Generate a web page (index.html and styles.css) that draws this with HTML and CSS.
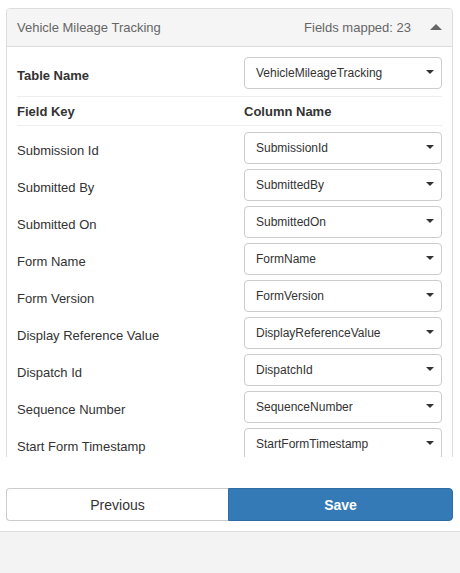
FILE: index.html
```html
<!DOCTYPE html>
<html>
<head>
<meta charset="utf-8">
<link rel="stylesheet" href="styles.css">
</head>
<body>
<div class="scroll">
  <div class="panel">
    <div class="panel-heading">
      <span class="title">Vehicle Mileage Tracking</span>
      <span class="count">Fields mapped: 23</span>
      <span class="caret-up"></span>
    </div>
    <div class="panel-body">
      <div class="row table-row">
        <span class="label bold">Table Name</span>
        <div class="select">VehicleMileageTracking<span class="caret"></span></div>
      </div>
      <div class="row head-row">
        <span class="bold">Field Key</span>
        <span class="bold">Column Name</span>
      </div>
      <div class="fields">
        <div class="row"><span class="label">Submission Id</span><div class="select">SubmissionId<span class="caret"></span></div></div>
        <div class="row"><span class="label">Submitted By</span><div class="select">SubmittedBy<span class="caret"></span></div></div>
        <div class="row"><span class="label">Submitted On</span><div class="select">SubmittedOn<span class="caret"></span></div></div>
        <div class="row"><span class="label">Form Name</span><div class="select">FormName<span class="caret"></span></div></div>
        <div class="row"><span class="label">Form Version</span><div class="select">FormVersion<span class="caret"></span></div></div>
        <div class="row"><span class="label">Display Reference Value</span><div class="select">DisplayReferenceValue<span class="caret"></span></div></div>
        <div class="row"><span class="label">Dispatch Id</span><div class="select">DispatchId<span class="caret"></span></div></div>
        <div class="row"><span class="label">Sequence Number</span><div class="select">SequenceNumber<span class="caret"></span></div></div>
        <div class="row"><span class="label">Start Form Timestamp</span><div class="select">StartFormTimestamp<span class="caret"></span></div></div>
      </div>
    </div>
  </div>
</div>
<div class="actions">
  <button class="btn btn-prev">Previous</button>
  <button class="btn btn-save">Save</button>
</div>
<div class="bottom"></div>
</body>
</html>
```

FILE: styles.css
```css
html, body {
  margin: 0;
  padding: 0;
  background: #fff;
  font-family: "Liberation Sans", Arial, Helvetica, sans-serif;
  color: #333;
}

.scroll {
  height: 457px;
  overflow: hidden;
  padding: 8px 7px 0 6px;
  box-sizing: border-box;
}

.panel {
  border: 1px solid #ddd;
  border-radius: 4px;
  background: #fff;
}

.panel-heading {
  height: 38px;
  box-sizing: border-box;
  background: #f5f5f5;
  border-bottom: 1px solid #ddd;
  border-radius: 4px 4px 0 0;
  display: flex;
  align-items: center;
  padding: 0 10px;
  font-size: 13px;
  color: #666;
}

.panel-heading .title {
  flex: 1;
}

.panel-heading .count {
  color: #666;
  margin-right: 19px;
}

.caret-up {
  width: 0;
  height: 0;
  margin-top: -1px;
  border-left: 6px solid transparent;
  border-right: 6px solid transparent;
  border-bottom: 6px solid #666;
}

.panel-body {
  padding: 10px 10px 0 10px;
}

.row {
  display: grid;
  grid-template-columns: 227px 198px;
  align-items: center;
  font-size: 13px;
}

.bold {
  font-weight: bold;
}

.label {
  padding-top: 5px;
}

.table-row {
  padding-bottom: 7px;
  border-bottom: 1px solid #eee;
}

.head-row {
  height: 29px;
  box-sizing: border-box;
  border-bottom: 1px solid #eee;
}

.fields {
  padding-top: 6px;
}

.fields .row {
  margin-bottom: 5px;
}

.select {
  position: relative;
  height: 32px;
  box-sizing: border-box;
  border: 1px solid #ccc;
  border-radius: 4px;
  padding: 0 12px 0 11px;
  display: flex;
  align-items: center;
  font-size: 12px;
  color: #333;
  background: #fff;
}

.caret {
  position: absolute;
  right: 7px;
  top: 12px;
  width: 0;
  height: 0;
  border-left: 4px solid transparent;
  border-right: 4px solid transparent;
  border-top: 4px solid #333;
}

.actions {
  display: flex;
  margin: 31px 7px 0 6px;
  height: 33px;
}

.btn {
  flex: 1;
  height: 33px;
  margin: 0;
  font-family: "Liberation Sans", Arial, Helvetica, sans-serif;
  font-size: 14px;
  cursor: pointer;
}

.btn-prev {
  background: #fff;
  color: #333;
  border: 1px solid #ccc;
  border-right: none;
  border-radius: 4px 0 0 4px;
  flex: 0 0 222px;
}

.btn-save {
  background: #337ab7;
  color: #fff;
  font-weight: bold;
  border: 1px solid #2e6da4;
  border-radius: 0 4px 4px 0;
}

.bottom {
  margin-top: 10px;
  height: 41px;
  background: #f3f3f3;
  border-top: 1px solid #ddd;
}
```
